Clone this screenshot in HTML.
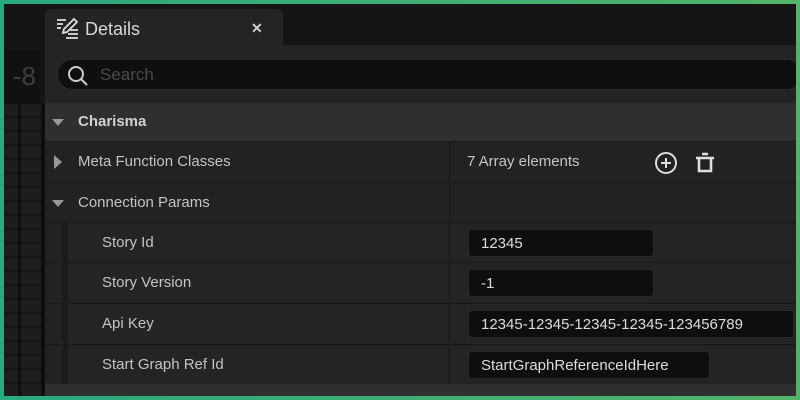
<!DOCTYPE html>
<html><head><style>
*{margin:0;padding:0;box-sizing:border-box}
body{width:800px;height:400px;overflow:hidden;background:linear-gradient(90deg,#2aa97e,#52b46a);position:relative;font-family:"Liberation Sans",sans-serif;color:#c8c8c8}
#app{position:absolute;left:4px;top:4px;width:792px;height:392px;background:#151515;overflow:hidden}
.left{position:absolute;left:0;top:0;width:41px;height:392px;background:#151515}
.grid{position:absolute;left:0;top:100px;width:37px;height:292px;background:
repeating-linear-gradient(0deg,#1d1d1d 0 12px,#151515 12px 14px)}
.gv{position:absolute;top:100px;width:3px;height:292px;background:#0e0e0e}
.m8{position:absolute;left:0;top:45px;width:36px;height:55px;background:#111;color:#3e3e3e;font-size:26px;line-height:55px;text-align:right;padding-right:4px;border-radius:0 0 4px 0}
.tab{position:absolute;left:41px;top:5px;width:238px;height:40px;background:#242424;border-radius:6px 6px 0 0}
.tab .t{position:absolute;left:40px;top:10px;font-size:18px;color:#d8d8d8}
.tab .x{position:absolute;left:206px;top:11px;font-size:14px;color:#ccc;font-weight:bold}
.body{position:absolute;left:41px;top:41px;width:751px;height:351px;background:#242424}
.search{position:absolute;left:12px;top:14px;width:745px;height:31px;background:#0f0f0f;border-radius:15px;border:1px solid #2a2a2a}
.search span{position:absolute;left:42px;top:5px;font-size:17px;color:#4a4a4a}
.row{position:absolute;left:0;width:751px;height:40px;background:#222;border-top:1px solid #191919}
.hdr{background:#2f2f2f;border:none}
.lbl{position:absolute;top:11px;font-size:15px;color:#c4c4c4}
.split{position:absolute;left:404px;top:0;width:1px;height:100%;background:#151515}
.ind{position:absolute;left:17px;top:0;width:6px;height:100%;background:#1b1b1b}
.inner{position:absolute;left:23px;top:0;right:0;height:100%;background:#242424}
.box{position:absolute;left:423px;top:6px;height:28px;background:#0e0e0e;border:1px solid #272727;border-radius:4px;font-size:15px;color:#ddd;padding:5px 0 0 12px}
.tri{position:absolute;width:0;height:0}
</style></head><body>
<div id="app">
<div class="left"><div class="m8">-8</div><div class="grid"></div><div class="gv" style="left:14px"></div><div class="gv" style="left:37px;width:4px"></div></div>
<div class="tab">
<svg style="position:absolute;left:11px;top:8px" width="24" height="22" viewBox="0 0 24 22" fill="none" stroke="#ddd" stroke-width="1.8"><path d="M1 3h9M1 7h6M1 11h4M14 13h8M12 17h10M10 21h12"/><path d="M18 2l3 3-10 10-4 1 1-4z"/></svg>
<div class="t">Details</div><div class="x">✕</div></div>
<div class="body">
<div class="search"><svg style="position:absolute;left:9px;top:5px" width="22" height="22" viewBox="0 0 22 22" fill="none" stroke="#ccc" stroke-width="2"><circle cx="9" cy="9" r="7"/><path d="M14 14l6 6"/></svg><span>Search</span></div>
<div class="row hdr" style="top:58px;height:38px"><div class="tri" style="left:7px;top:16px;border-left:6px solid transparent;border-right:6px solid transparent;border-top:7px solid #999"></div><div class="lbl" style="left:33px;top:10px;font-weight:bold;color:#d0d0d0">Charisma</div></div>
<div class="row" style="top:96px"><div class="tri" style="left:9px;top:13px;border-top:7px solid transparent;border-bottom:7px solid transparent;border-left:8px solid #999"></div><div class="lbl" style="left:33px">Meta Function Classes</div><div class="split"></div><div class="lbl" style="left:422px">7 Array elements</div>
<svg style="position:absolute;left:609px;top:9px" width="24" height="24" viewBox="0 0 24 24" fill="none" stroke="#ddd" stroke-width="2"><circle cx="12" cy="12" r="10"/><path d="M12 7v10M7 12h10"/></svg>
<svg style="position:absolute;left:650px;top:10px" width="20" height="22" viewBox="0 0 20 22" fill="none" stroke="#ddd" stroke-width="2.6"><path d="M7 2h6M1 6h18M4 6v13h12V6"/></svg></div>
<div class="row" style="top:137px"><div class="tri" style="left:7px;top:17px;border-left:6px solid transparent;border-right:6px solid transparent;border-top:7px solid #999"></div><div class="lbl" style="left:33px">Connection Params</div><div class="split"></div></div>
<div class="row" style="top:177px"><div class="ind"></div><div class="inner"></div><div class="lbl" style="left:57px">Story Id</div><div class="split"></div><div class="box" style="width:186px">12345</div></div>
<div class="row" style="top:217px"><div class="ind"></div><div class="inner"></div><div class="lbl" style="left:57px">Story Version</div><div class="split"></div><div class="box" style="width:186px">-1</div></div>
<div class="row" style="top:258px"><div class="ind"></div><div class="inner"></div><div class="lbl" style="left:57px">Api Key</div><div class="split"></div><div class="box" style="width:326px">12345-12345-12345-12345-123456789</div></div>
<div class="row" style="top:299px"><div class="ind"></div><div class="inner"></div><div class="lbl" style="left:57px">Start Graph Ref Id</div><div class="split"></div><div class="box" style="width:242px">StartGraphReferenceIdHere</div></div>
<div class="row hdr" style="top:339px;height:12px"></div>
</div>
</div>
</body></html>
